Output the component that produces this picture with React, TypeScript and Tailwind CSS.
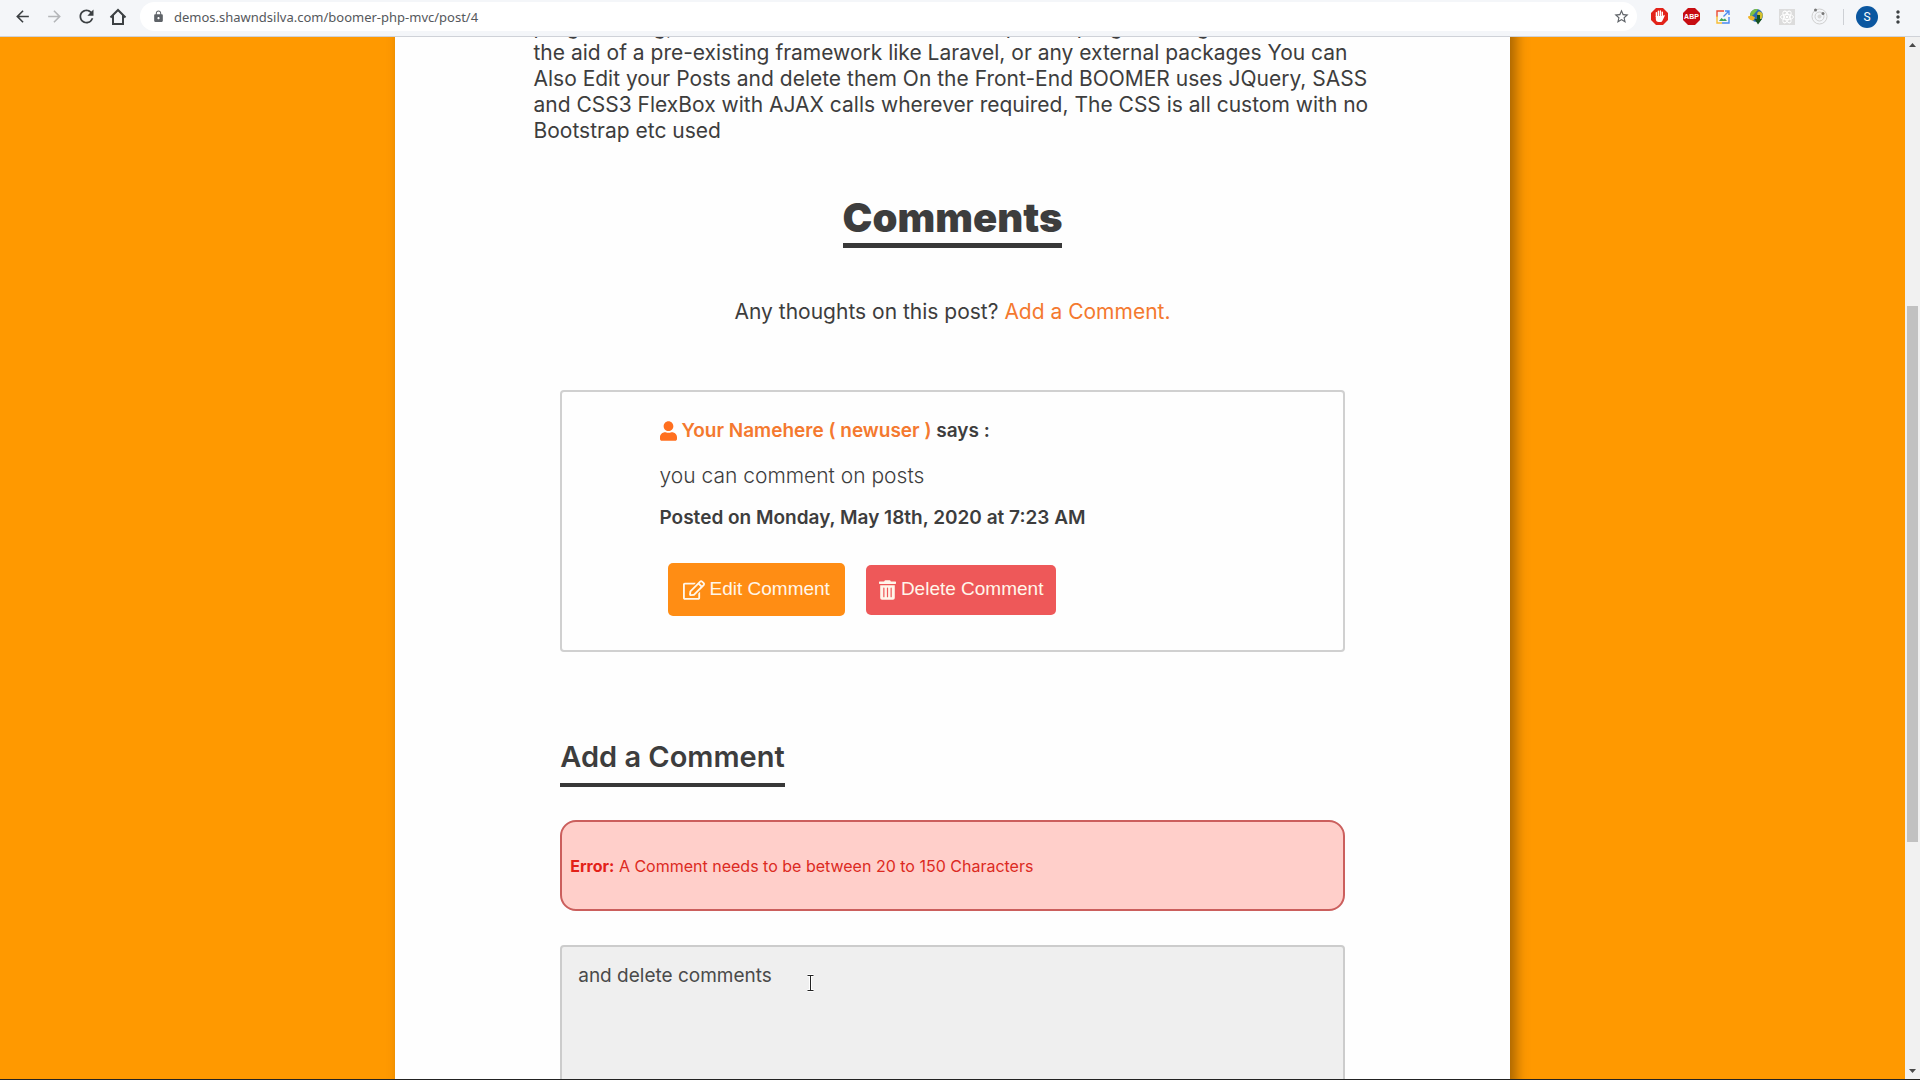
import React, { useState } from 'react';
import { FaRegEdit, FaTrashAlt, FaUser } from 'react-icons/fa';
import { MdArrowBack, MdArrowForward, MdLock, MdMoreVert, MdRefresh, MdStarBorder } from 'react-icons/md';

interface ToolbarButtonProps {
  label: string;
  className?: string;
  children: React.ReactNode;
}

const ToolbarButton: React.FC<ToolbarButtonProps> = ({ label, className = 'text-[#3c4043]', children }) => (
  <button type="button" aria-label={label} className={`flex w-8 h-8 shrink-0 items-center justify-center ${className}`}>
    {children}
  </button>
);

const HomeIcon = () => (
  <svg width="18" height="18" viewBox="0 0 18 18" fill="none" stroke="currentColor" strokeWidth="2">
    <path d="M1.5 9.5 9 2l7.5 7.5M4 7.5V16h10V7.5" />
  </svg>
);

const AdblockIcon = () => (
  <svg width="17" height="17" viewBox="0 0 17 17">
    <path d="M5 0h7l5 5v7l-5 5H5l-5-5V5z" fill="#e2231a" />
    <path
      d="M5.4 8.5V4.6M7.4 8V3.2M9.4 8V3M11.3 8.5V4.2"
      stroke="#fff"
      strokeWidth="1.4"
      strokeLinecap="round"
    />
    <path d="M4.8 8h7.2l1.2-1.2.6.9-2.4 5.1c-.4.8-1 1.2-2 1.2H7.6c-1.7 0-2.8-1.2-2.8-3z" fill="#fff" />
  </svg>
);

const AbpIcon = () => (
  <svg width="17" height="17" viewBox="0 0 17 17">
    <path d="M5 0h7l5 5v7l-5 5H5l-5-5V5z" fill="#c70d12" />
    <text x="8.5" y="11" textAnchor="middle" fill="#fff" fontSize="7" fontWeight="700" fontFamily="Liberation Sans, sans-serif">
      ABP
    </text>
  </svg>
);

const CaptureIcon = () => (
  <svg width="14" height="14" viewBox="0 0 14 14" fill="none">
    <path d="M8 1H1v6" stroke="#ea4a35" strokeWidth="1.4" />
    <path d="M1 6v7h5" stroke="#f7bd35" strokeWidth="1.4" />
    <path d="M6 13h7V7" stroke="#4a8af0" strokeWidth="1.4" />
    <path d="M3 11l2.5-3 1.8 1.6L9 8.5l2 2.5z" fill="#3fa757" />
    <path d="M7.5 6.5 12.5 1.5M9 1h4v4" stroke="#4a8af0" strokeWidth="1.4" />
  </svg>
);

const GlobeIcon = () => (
  <svg width="17" height="17" viewBox="0 0 17 17">
    <circle cx="9.5" cy="7.5" r="6.5" fill="#2c6db5" />
    <path d="M4 4c2-3 5-3.5 7-2.8-1 2-2 2.3-3 3.8S5 8 3.2 8.5C3 7 3.3 5 4 4z" fill="#7cc142" />
    <path d="M11 4c2-1 3.5 0 4.7 2 .3 2-.5 4-1.7 5.500-2 0-2-2-3-3.500s-1-3 0-4z" fill="#d6c22f" />
    <path d="M1 8.500c2-1.500 5-1 7 1l-1.500 3C4 12.500 1 11 1 8.500z" fill="#f0b429" />
    <path d="M10 7h3v4h2l-4 5.500L7.500 11H10z" fill="#17531f" />
  </svg>
);

const ReactIcon = () => (
  <svg width="16" height="16" viewBox="0 0 16 16" fill="none">
    <path d="M0 0h16v16H0z" fill="#dcdcdc" />
    <g stroke="#fff" strokeWidth="1">
      <ellipse cx="8" cy="8" rx="6.5" ry="2.6" />
      <ellipse cx="8" cy="8" rx="6.5" ry="2.6" transform="rotate(60 8 8)" />
      <ellipse cx="8" cy="8" rx="6.5" ry="2.6" transform="rotate(120 8 8)" />
    </g>
    <circle cx="8" cy="8" r="1.3" fill="#fff" />
  </svg>
);

const OrbitIcon = () => (
  <svg width="17" height="17" viewBox="0 0 17 17" fill="none">
    <circle cx="8.5" cy="8.5" r="7.5" stroke="#cfcfcf" />
    <circle cx="8.5" cy="8.5" r="4.5" stroke="#cfcfcf" />
    <circle cx="8.5" cy="8.5" r="2" fill="#d8d8d8" />
    <circle cx="4.5" cy="2" r="1.5" fill="#777" />
    <circle cx="12" cy="5.5" r="1.5" fill="#777" />
  </svg>
);

const BrowserBar = () => {
  const [url, setUrl] = useState('demos.shawndsilva.com/boomer-php-mvc/post/4');

  return (
    <header className="flex h-[37px] shrink-0 items-start border-b border-[#cfd2d8] bg-[#f4f6f9] px-[6px] pt-[2px]">
      <nav className="flex h-[29px] items-center">
        <ToolbarButton label="Back"><MdArrowBack size={19} /></ToolbarButton>
        <ToolbarButton label="Forward" className="text-[#b4b6b9]"><MdArrowForward size={19} /></ToolbarButton>
        <ToolbarButton label="Reload"><MdRefresh size={21} /></ToolbarButton>
        <ToolbarButton label="Home"><HomeIcon /></ToolbarButton>
      </nav>
      <div className="mx-[6px] flex h-[29px] flex-1 items-center rounded-full bg-white pl-3 pr-1">
        <MdLock size={13} className="shrink-0 text-[#5f6368]" />
        <input
          type="text"
          aria-label="Address"
          value={url}
          onChange={(e) => setUrl(e.target.value)}
          className="ml-[9px] min-w-0 flex-1 bg-transparent font-['Noto_Sans',sans-serif] text-[13px] leading-5 text-[#55585c] outline-none"
        />
        <button type="button" aria-label="Bookmark this page" className="flex w-6 items-center justify-center text-[#5f6368]">
          <MdStarBorder size={17} />
        </button>
      </div>
      <div className="flex h-[29px] items-center">
        <ToolbarButton label="AdBlock"><AdblockIcon /></ToolbarButton>
        <ToolbarButton label="Adblock Plus"><AbpIcon /></ToolbarButton>
        <ToolbarButton label="Screen capture"><CaptureIcon /></ToolbarButton>
        <ToolbarButton label="Download manager"><GlobeIcon /></ToolbarButton>
        <ToolbarButton label="React tools"><ReactIcon /></ToolbarButton>
        <ToolbarButton label="Orbit"><OrbitIcon /></ToolbarButton>
        <span className="mx-2 h-4 w-px bg-[#cdd0d5]" />
        <button
          type="button"
          aria-label="Profile"
          className="mx-1 flex h-[22px] w-[22px] items-center justify-center rounded-full bg-[#0b57a0] font-['Roboto',sans-serif] text-xs text-white"
        >
          S
        </button>
        <ToolbarButton label="Menu"><MdMoreVert size={20} /></ToolbarButton>
      </div>
    </header>
  );
};

const Scrollbar = () => (
  <div className="flex w-[15px] shrink-0 flex-col items-center bg-[#f1f1f1]">
    <svg width="15" height="15" viewBox="0 0 15 15" fill="#4a4a4a"><path d="M4 10h7L7.5 6z" /></svg>
    <div className="grow-[251]" />
    <div className="w-[11px] grow-[530] bg-[#c1c1c1]" />
    <div className="grow-[219]" />
    <svg width="15" height="15" viewBox="0 0 15 15" fill="#4a4a4a"><path d="M4 5h7l-3.5 4z" /></svg>
  </div>
);

const CommentCard = () => (
  <article className="mt-[65px] rounded-[4px] border-2 border-[#d0d0d0] pb-[34px] pl-[12.4%] pt-[27px]">
    <h4 className="flex items-center gap-[5px] text-[19px] font-semibold leading-6">
      <FaUser className="h-5 w-[17px] text-[#ff6f1f]" />
      <span>
        <a href="#newuser" className="text-[#f4792f]">Your Namehere ( newuser )</a> says :
      </span>
    </h4>
    <p className="mt-5 text-[21px] font-light leading-[26px]">you can comment on posts</p>
    <p className="mt-[17px] text-[19px] font-semibold leading-6">Posted on Monday, May 18th, 2020 at 7:23 AM</p>
    <div className="ml-2 mt-[33px] flex items-center gap-[21px] font-['Liberation_Sans',sans-serif] text-[19px] text-[#fff6ea]">
      <button type="button" className="flex h-[53px] items-center gap-[5px] rounded-[5px] bg-[#ff8d14] px-[15px]">
        <FaRegEdit className="h-5 w-[22px]" />
        Edit Comment
      </button>
      <button type="button" className="flex h-[50px] items-center gap-[5px] rounded-[5px] bg-[#ee5859] px-[13px]">
        <FaTrashAlt className="h-5 w-[17px]" />
        Delete Comment
      </button>
    </div>
  </article>
);

const CommentForm = () => {
  const [comment, setComment] = useState('and delete comments');

  return (
    <form className="mt-[87px]">
      <label
        htmlFor="comment"
        className="inline-block border-b-4 border-[#383838] pb-2 text-[29px] font-semibold leading-9"
      >
        Add a Comment
      </label>
      <div
        role="alert"
        className="mt-[33px] flex h-[91px] items-center rounded-2xl border-2 border-[#cb5f5d] bg-[#ffcfca] pl-2 text-base text-[#dc2a22]"
      >
        <p><strong className="font-bold text-[#e32118]">Error:</strong> A Comment needs to be between 20 to 150 Characters</p>
      </div>
      <div className="relative mt-[34px]">
        <textarea
          id="comment"
          rows={8}
          value={comment}
          onChange={(e) => setComment(e.target.value)}
          className="block w-full resize-none rounded-[4px] border-2 border-[#cccccc] bg-[#efefef] px-4 py-[17px] text-[19px] leading-6 text-[#4a4a4a] outline-none"
        />
        {/* text cursor */}
        <svg className="absolute left-[246px] top-[29px]" width="9" height="18" viewBox="0 0 9 18" fill="none">
          <path d="M1.5 1.5H4.5V16.5M7.5 1.5H4.5M1.5 16.5H7.5" stroke="#fff" strokeWidth="3" />
          <path d="M1.5 1.5H7.5M4.5 1.5V16.5M1.5 16.5H7.5" stroke="#222" strokeWidth="1" />
        </svg>
      </div>
    </form>
  );
};

export default function App() {
  return (
    <div className="flex h-screen flex-col overflow-hidden border-b border-[#222222] font-['Inter',sans-serif] text-[#3d3d3d]">
      <BrowserBar />
      <div className="flex min-h-0 flex-1">
        <main className="min-w-0 flex-1 overflow-hidden bg-[#ff9900]">
          <div className="mx-auto min-h-full w-[58.5%] bg-[#fefefe] shadow-[6px_0_12px_rgba(0,0,0,0.35)]">
            {/* post body, already scrolled past its first lines */}
            <p className="-mt-[23px] pl-[12.4%] pr-[12%] text-[21px] leading-[26px]">
              programming, and was made from the bottom up from programming without
              <br />
              the aid of a pre-existing framework like Laravel, or any external packages You can Also Edit your Posts
              and delete them On the Front-End BOOMER uses JQuery, SASS and CSS3 FlexBox with AJAX calls wherever
              required, The CSS is all custom with no Bootstrap etc used
            </p>
            <section className="mx-auto w-[70.4%]">
              <div className="mt-[50px] text-center">
                <h2 className="inline-block border-b-[5px] border-[#383838] pb-px text-[40px] font-black leading-[48px]">
                  Comments
                </h2>
                <p className="mt-[51px] text-[21px] leading-[26px]">
                  Any thoughts on this post? <a href="#comment" className="text-[#f4792f]">Add a Comment.</a>
                </p>
              </div>
              <CommentCard />
              <CommentForm />
            </section>
          </div>
        </main>
        <Scrollbar />
      </div>
    </div>
  );
}
